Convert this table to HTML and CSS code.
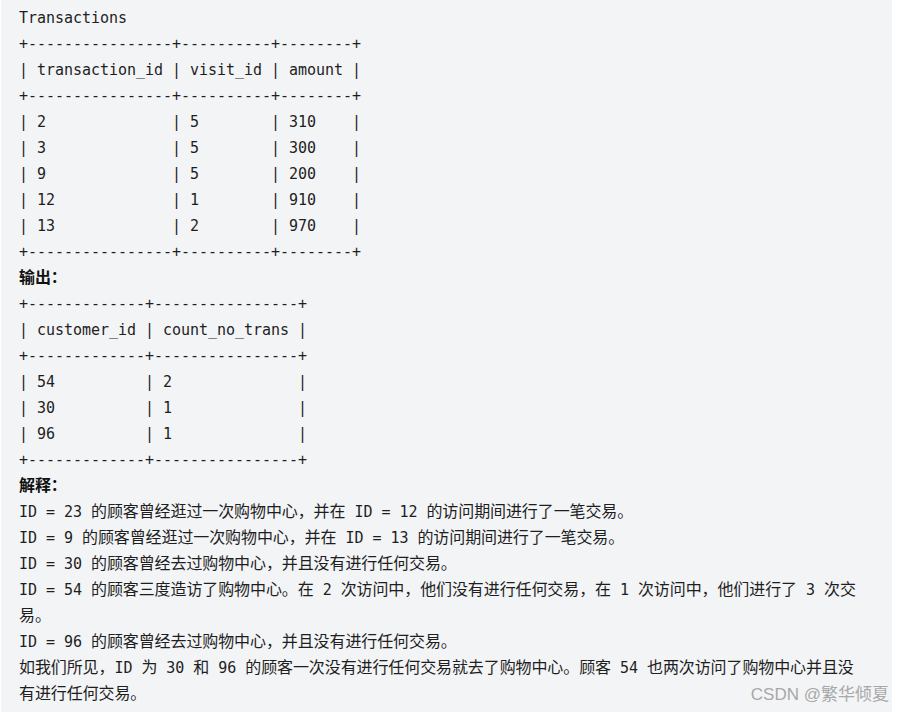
FILE: index.html
```html
<!DOCTYPE html>
<html lang="zh">
<head>
<meta charset="utf-8">
<title>Transactions</title>
<link rel="stylesheet" href="styles.css">
</head>
<body>
<div class="code">
<div class="ln">Transactions</div>
<div class="ln">+----------------+----------+--------+</div>
<div class="ln">| transaction_id | visit_id | amount |</div>
<div class="ln">+----------------+----------+--------+</div>
<div class="ln">| 2              | 5        | 310    |</div>
<div class="ln">| 3              | 5        | 300    |</div>
<div class="ln">| 9              | 5        | 200    |</div>
<div class="ln">| 12             | 1        | 910    |</div>
<div class="ln">| 13             | 2        | 970    |</div>
<div class="ln">+----------------+----------+--------+</div>
<div class="ln"><span class="zh lbl">输出：</span></div>
<div class="ln">+-------------+----------------+</div>
<div class="ln">| customer_id | count_no_trans |</div>
<div class="ln">+-------------+----------------+</div>
<div class="ln">| 54          | 2              |</div>
<div class="ln">| 30          | 1              |</div>
<div class="ln">| 96          | 1              |</div>
<div class="ln">+-------------+----------------+</div>
<div class="ln"><span class="zh lbl">解释：</span></div>
<div class="ln">ID = 23 <span class="zh">的顾客曾经逛过一次购物中心，并在</span> ID = 12 <span class="zh">的访问期间进行了一笔交易。</span></div>
<div class="ln">ID = 9 <span class="zh">的顾客曾经逛过一次购物中心，并在</span> ID = 13 <span class="zh">的访问期间进行了一笔交易。</span></div>
<div class="ln">ID = 30 <span class="zh">的顾客曾经去过购物中心，并且没有进行任何交易。</span></div>
<div class="ln">ID = 54 <span class="zh">的顾客三度造访了购物中心。在</span> 2 <span class="zh">次访问中，他们没有进行任何交易，在</span> 1 <span class="zh">次访问中，他们进行了</span> 3 <span class="zh">次交</span></div>
<div class="ln"><span class="zh">易。</span></div>
<div class="ln">ID = 96 <span class="zh">的顾客曾经去过购物中心，并且没有进行任何交易。</span></div>
<div class="ln"><span class="zh">如我们所见，</span>ID <span class="zh">为</span> 30 <span class="zh">和</span> 96 <span class="zh">的顾客一次没有进行任何交易就去了购物中心。顾客</span> 54 <span class="zh">也两次访问了购物中心并且没</span></div>
<div class="ln"><span class="zh">有进行任何交易。</span></div>
<div class="wm">CSDN @繁华倾夏</div>
</div>
</body>
</html>
```

FILE: styles.css
```css
html, body {
  margin: 0;
  padding: 0;
  background: #ffffff;
}

.code {
  position: relative;
  margin-left: 1px;
  width: 891px;
  height: 712px;
  overflow: hidden;
  box-sizing: border-box;
  padding: 5px 19px 0 18px;
  background: #f3f4f6;
  font-family: "DejaVu Sans Mono", "Liberation Mono", "Noto Sans CJK SC", monospace;
  font-size: 15px;
  letter-spacing: -0.03px;
  color: #1e1e1e;
}

.ln {
  height: 26px;
  line-height: 26px;
  white-space: pre;
}

.zh {
  font-family: "Noto Sans CJK SC", sans-serif;
  font-size: 16px;
  line-height: 20px;
  letter-spacing: -0.1px;
}

.lbl {
  font-weight: bold;
  color: #111111;
}

.wm {
  position: absolute;
  right: 3px;
  bottom: 7px;
  font-family: "Liberation Sans", "Noto Sans CJK SC", sans-serif;
  font-size: 17px;
  letter-spacing: 0;
  color: #a8a8a8;
  white-space: nowrap;
}
```
